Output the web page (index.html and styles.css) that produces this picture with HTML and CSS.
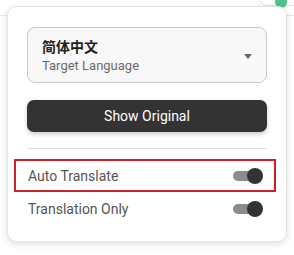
FILE: index.html
```html
<!DOCTYPE html>
<html>
<head>
<meta charset="utf-8">
<link rel="stylesheet" href="styles.css">
</head>
<body>
<div class="page-header"></div>
<div class="corner-tab"><span class="status-dot"></span></div>
<div class="popup">
  <div class="select">
    <div class="select-text">
      <div class="select-value">简体中文</div>
      <div class="select-label">Target Language</div>
    </div>
    <span class="caret"></span>
  </div>
  <button class="btn">Show Original</button>
  <div class="divider"></div>
  <div class="row row-highlight">
    <span class="row-label">Auto Translate</span>
    <span class="toggle"><span class="track"></span><span class="knob"></span></span>
  </div>
  <div class="row">
    <span class="row-label">Translation Only</span>
    <span class="toggle"><span class="track"></span><span class="knob"></span></span>
  </div>
</div>
</body>
</html>
```
FILE: styles.css
```css
* { box-sizing: border-box; }
html, body { margin: 0; padding: 0; background: #fff; }
body {
  width: 294px;
  height: 255px;
  overflow: hidden;
  position: relative;
  font-family: Roboto, "Noto Sans CJK SC", sans-serif;
}
.page-header {
  height: 16px;
  border-bottom: 1px solid #e6e6e6;
}
.corner-tab {
  position: absolute;
  left: 258px;
  top: -10px;
  width: 50px;
  height: 16px;
  border: 1px solid #e3e3e3;
  border-radius: 0 0 0 9px;
  background: #fff;
}
.status-dot {
  position: absolute;
  left: 16px;
  top: 5px;
  width: 12px;
  height: 12px;
  border-radius: 50%;
  background: #4fc28a;
}
.popup {
  position: absolute;
  left: 7px;
  top: 6px;
  width: 280px;
  height: 236px;
  background: #fff;
  border: 1px solid #e4e4e4;
  border-radius: 9px;
  box-shadow: 0 2px 7px rgba(0,0,0,0.13);
  padding: 20px 19px 16px 19px;
  display: flex;
  flex-direction: column;
}
.select {
  height: 56px;
  border: 1px solid #c9c9c9;
  border-radius: 8px;
  background: #f8f8f8;
  display: flex;
  align-items: center;
  justify-content: space-between;
  padding: 0 14px 0 14px;
}
.select-text { display: flex; flex-direction: column; gap: 2px; margin-top: 3px; }
.select-value {
  font-family: Roboto, "Noto Sans CJK SC", sans-serif;
  font-size: 14px;
  font-weight: 700;
  color: #1f1f1f;
  line-height: 17px;
}
.select-label {
  font-size: 13px;
  color: #6b6b6b;
  line-height: 16px;
}
.caret {
  width: 0;
  height: 0;
  border-left: 4.5px solid transparent;
  border-right: 4.5px solid transparent;
  border-top: 5px solid #666;
  margin-top: 2px;
}
.btn {
  margin-top: 17px;
  height: 32px;
  border: none;
  border-radius: 7px;
  background: #333333;
  color: #fff;
  font-family: Roboto, sans-serif;
  font-size: 14px;
  font-weight: 400;
  box-shadow: 0 2px 4px rgba(0,0,0,0.22);
  padding: 0;
}
.divider {
  margin-top: 16px;
  height: 1px;
  background: #dedede;
}
.row {
  height: 33px;
  margin: 0 -9px 0 -13px;
  padding: 0 13px 0 14px;
  display: flex;
  align-items: center;
  justify-content: space-between;
}
.row-highlight {
  margin-top: 10px;
  border: 2px solid #c8232c;
  padding: 0 11px 0 12px;
}
.row + .row { margin-top: 0; }
.row-label {
  font-size: 14px;
  color: #555;
}
.toggle {
  position: relative;
  width: 30px;
  height: 16px;
  flex-shrink: 0;
}
.track {
  position: absolute;
  left: 0;
  top: 3px;
  width: 25px;
  height: 10px;
  border-radius: 5px;
  background: #8c8c8c;
}
.knob {
  position: absolute;
  right: 0;
  top: 0;
  width: 16px;
  height: 16px;
  border-radius: 50%;
  background: #333;
}
```
